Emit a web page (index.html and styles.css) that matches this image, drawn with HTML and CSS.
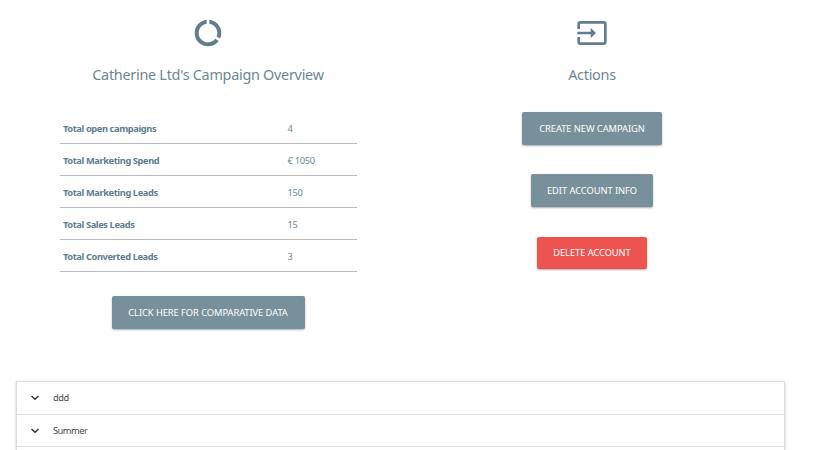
FILE: index.html
```html
<!DOCTYPE html>
<html lang="en">
<head>
<meta charset="utf-8">
<title>Campaign Overview</title>
<link rel="stylesheet" href="styles.css">
</head>
<body>
<main class="page">
  <div class="columns">
    <section class="column">
      <svg class="icon" viewBox="0 0 24 24"><path d="M13 2.05v3.03c3.39.49 6 3.39 6 6.92 0 .9-.18 1.75-.48 2.54l2.6 1.53c.56-1.24.88-2.62.88-4.07 0-5.18-3.95-9.45-9-9.95zM12 19c-3.87 0-7-3.13-7-7 0-3.53 2.61-6.43 6-6.92V2.05c-5.06.5-9 4.76-9 9.95 0 5.52 4.47 10 9.99 10 3.31 0 6.24-1.61 8.06-4.09l-2.6-1.53C16.17 17.98 14.21 19 12 19z"/></svg>
      <h1 class="heading">Catherine Ltd's Campaign Overview</h1>
      <dl class="stats">
        <div class="stat"><dt>Total open campaigns</dt><dd>4</dd></div>
        <div class="stat"><dt>Total Marketing Spend</dt><dd>€ 1050</dd></div>
        <div class="stat"><dt>Total Marketing Leads</dt><dd>150</dd></div>
        <div class="stat"><dt>Total Sales Leads</dt><dd>15</dd></div>
        <div class="stat"><dt>Total Converted Leads</dt><dd>3</dd></div>
      </dl>
      <a class="btn btn-compare">CLICK HERE FOR COMPARATIVE DATA</a>
    </section>
    <section class="column">
      <svg class="icon" viewBox="0 0 24 24"><path d="M21 3.01H3c-1.1 0-2 .9-2 2V9h2V4.99h18v14.03H3V15H1v4.01c0 1.1.9 1.98 2 1.98h18c1.1 0 2-.88 2-1.98v-14c0-1.11-.9-2-2-2zM11 16l4-4-4-4v3H1v2h10v3z"/></svg>
      <h1 class="heading">Actions</h1>
      <div class="actions">
        <a class="btn btn-create">CREATE NEW CAMPAIGN</a>
        <a class="btn btn-edit">EDIT ACCOUNT INFO</a>
        <a class="btn btn-delete">DELETE ACCOUNT</a>
      </div>
    </section>
  </div>
  <ul class="campaigns">
    <li class="campaign"><svg class="chevron" viewBox="0 0 10 10"><path d="M1.5 3 5 6.2 8.5 3"/></svg><span>ddd</span></li>
    <li class="campaign"><svg class="chevron" viewBox="0 0 10 10"><path d="M1.5 3 5 6.2 8.5 3"/></svg><span>Summer</span></li>
  </ul>
</main>
</body>
</html>
```
FILE: styles.css
```css
* { box-sizing: border-box; }
html, body { margin: 0; height: 450px; overflow: hidden; }
body {
  background: #fff;
  color: #607d8b;
  font: 9.3px/1.5 "Noto Sans", "Open Sans", sans-serif;
}
.page { width: 768px; height: 450px; margin-left: 16px; }
.columns { display: grid; grid-template-columns: 1fr 1fr; height: 381px; }
.column { display: flex; flex-direction: column; align-items: center; padding-top: 17px; }
.icon { width: 32px; height: 32px; margin-bottom: 1px; fill: #607d8b; }
.heading {
  margin: 15px 0 0;
  color: #6c8794;
  font-size: 14.4px;
  line-height: 20px;
  font-weight: 400;
  letter-spacing: -0.27px;
  white-space: nowrap;
}
.stats { width: 297px; margin: 27px 0 24px; }
.stat {
  display: flex;
  align-items: center;
  height: 32px;
  padding: 2px 3px 0;
  border-bottom: 1px solid #b9b9b9;
}
.stat dt { width: 225px; padding-left: 0.5px; font-weight: 700; letter-spacing: -0.4px; }
.stat dd { margin: 0; color: #6c8794; letter-spacing: -0.3px; }
.btn {
  display: flex;
  align-items: center;
  justify-content: center;
  height: 32.5px;
  padding-top: 1px;
  border-radius: 2px;
  background: #78909c;
  color: #fff;
  letter-spacing: -0.05px;
  white-space: nowrap;
  box-shadow: 0 1px 2px rgba(0, 0, 0, 0.32);
}
.actions { display: flex; flex-direction: column; align-items: center; gap: 29.8px; margin-top: 27px; }
.btn-compare { width: 193px; }
.btn-create { width: 140px; }
.btn-edit { width: 122px; }
.btn-delete { width: 110px; background: #ef5350; }
.campaigns {
  width: 769px;
  height: 69px;
  margin: 0;
  padding: 0;
  list-style: none;
  border: 1px solid #ddd;
  border-bottom: 0;
  box-shadow: 0 1px 3px rgba(0, 0, 0, 0.2);
}
.campaign {
  display: flex;
  align-items: center;
  height: 32.5px;
  padding-left: 13px;
  border-bottom: 1px solid #e2e2e2;
  color: #4a4a4a;
  letter-spacing: -0.5px;
}
.campaign + .campaign { padding-top: 1px; }
.chevron { width: 10px; height: 10px; margin-right: 13px; fill: none; stroke: #333; stroke-width: 1.5; }
```
